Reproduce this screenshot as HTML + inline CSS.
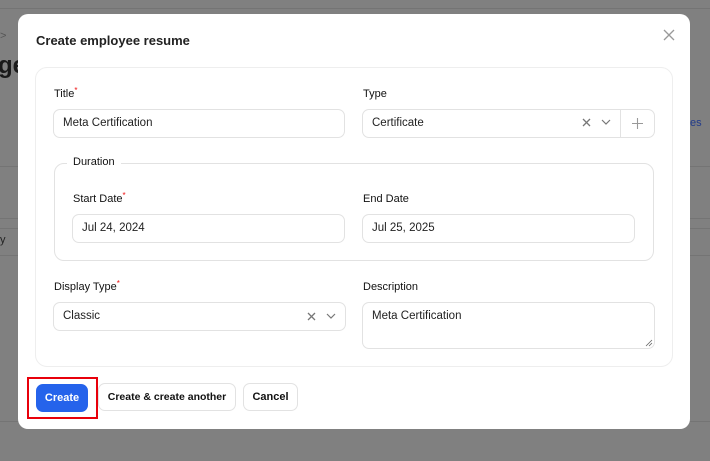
<!DOCTYPE html>
<html><head><style>
*{box-sizing:border-box;margin:0;padding:0}
body{width:710px;height:461px;background:#808080;font-family:"Liberation Sans",sans-serif;position:relative;overflow:hidden;color:#111}
.a{position:absolute}
.line{position:absolute;left:0;right:0;height:1px;background:#747474}
.modal{left:18px;top:14px;width:672px;height:415px;background:#fff;border-radius:10px}
.card{left:35px;top:67px;width:638px;height:300px;border:1px solid #eee;border-radius:12px}
.lbl{font-size:11px;color:#111}
.lbl i{color:#e11;font-style:normal;font-size:8px;vertical-align:top;position:relative;top:-2px}
.inp{border:1px solid #e2e2e2;border-radius:7px;height:29px;font-size:11.5px;padding:0 9px;line-height:27px;color:#222}
.btn{border:1px solid #e2e2e2;border-radius:7px;height:28px;font-size:11px;font-weight:bold;line-height:26px;text-align:center}
</style></head><body>
<div class="line" style="top:8px"></div>
<div class="line" style="top:166px"></div>
<div class="line" style="top:218px"></div>
<div class="line" style="top:228px"></div>
<div class="line" style="top:255px"></div>
<div class="line" style="top:421px"></div>
<div class="a" style="left:0;top:30px;font-size:11px;color:#555">&gt;</div>
<div class="a" style="left:-2px;top:52px;font-size:24px;font-weight:bold;color:#1a1a1a">ge</div>
<div class="a" style="left:0;top:234px;font-size:11px;color:#222">y</div>
<div class="a" style="left:690px;top:117px;font-size:11px;color:#203a8a">es</div>
<div class="a modal"></div>
<div class="a" style="left:36px;top:33px;font-size:13px;font-weight:bold;color:#222">Create employee resume</div>
<svg class="a" style="left:663px;top:29px" width="12" height="12"><path d="M1 1L11 11M11 1L1 11" stroke="#999" stroke-width="1.3"/></svg>
<div class="a card"></div>
<div class="a lbl" style="left:54px;top:88px">Title<i>*</i></div>
<div class="a inp" style="left:53px;top:109px;width:292px">Meta Certification</div>
<div class="a lbl" style="left:363px;top:88px">Type</div>
<div class="a inp" style="left:362px;top:109px;width:293px">Certificate</div>
<div class="a" style="left:620px;top:110px;width:1px;height:27px;background:#e2e2e2"></div>
<svg class="a" style="left:582px;top:118px" width="9" height="9"><path d="M1 1L8 8M8 1L1 8" stroke="#777" stroke-width="1.3"/></svg>
<svg class="a" style="left:601px;top:119px" width="10" height="6"><path d="M1 1L5 5L9 1" stroke="#777" fill="none" stroke-width="1.2"/></svg>
<svg class="a" style="left:632px;top:118px" width="11" height="11"><path d="M5.5 0V11M0 5.5H11" stroke="#999" stroke-width="1.1"/></svg>
<div class="a" style="left:54px;top:163px;width:600px;height:98px;border:1px solid #e2e2e2;border-radius:10px"></div>
<div class="a" style="left:67px;top:156px;background:#fff;padding:0 6px;font-size:11px;color:#111">Duration</div>
<div class="a lbl" style="left:73px;top:193px">Start Date<i>*</i></div>
<div class="a inp" style="left:72px;top:214px;width:273px">Jul 24, 2024</div>
<div class="a lbl" style="left:363px;top:193px">End Date</div>
<div class="a inp" style="left:362px;top:214px;width:273px">Jul 25, 2025</div>
<div class="a lbl" style="left:54px;top:281px">Display Type<i>*</i></div>
<div class="a inp" style="left:53px;top:302px;width:293px">Classic</div>
<svg class="a" style="left:307px;top:312px" width="9" height="9"><path d="M1 1L8 8M8 1L1 8" stroke="#777" stroke-width="1.3"/></svg>
<svg class="a" style="left:326px;top:313px" width="10" height="6"><path d="M1 1L5 5L9 1" stroke="#777" fill="none" stroke-width="1.2"/></svg>
<div class="a lbl" style="left:363px;top:281px">Description</div>
<div class="a inp" style="left:362px;top:302px;width:293px;height:47px;line-height:26px">Meta Certification</div>
<svg class="a" style="left:645px;top:339px" width="8" height="8"><path d="M1 7L7 1M4 7L7 4" stroke="#666" stroke-width="0.8"/></svg>
<div class="a" style="left:27px;top:377px;width:71px;height:42px;border:2px solid #e8000b"></div>
<div class="a btn" style="left:36px;top:384px;width:52px;background:#2563eb;border-color:#2563eb;color:#fff">Create</div>
<div class="a btn" style="left:98px;top:383px;width:138px;font-size:10.5px">Create &amp; create another</div>
<div class="a btn" style="left:243px;top:383px;width:55px">Cancel</div>
</body></html>
